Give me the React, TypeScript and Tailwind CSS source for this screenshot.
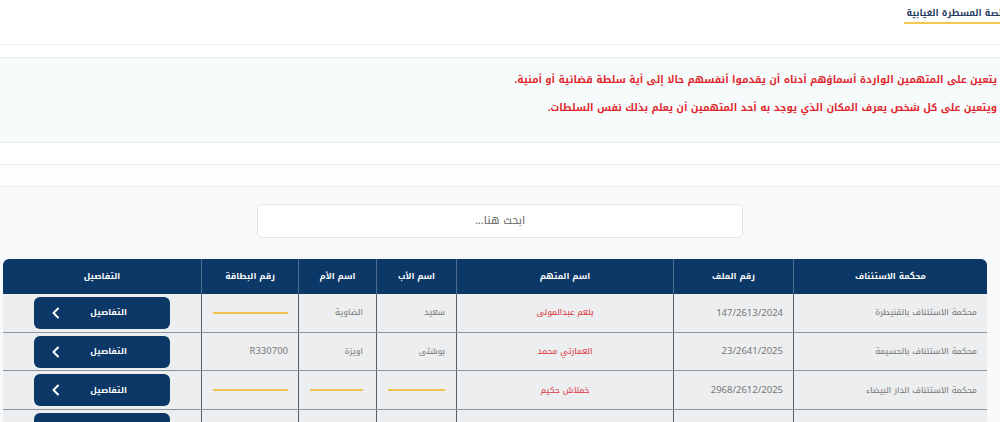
import React from "react";

const Dash = () => <div className="h-[2px] w-full bg-[#f0c24e]" />;

type Row = {
  court: string;
  file: string;
  name: string;
  father: string | null;
  mother: string | null;
  card: string | null;
};

const rows: Row[] = [
  { court: "محكمة الاستئناف بالقنيطرة", file: "147/2613/2024", name: "بلعم عبدالمولى", father: "سعيد", mother: "الضاوية", card: null },
  { court: "محكمة الاستئناف بالحسيمة", file: "23/2641/2025", name: "العمارتي محمد", father: "بوشتى", mother: "اويزة", card: "R330700" },
  { court: "محكمة الاستئناف الدار البيضاء", file: "2968/2612/2025", name: "خملاش حكيم", father: null, mother: null, card: null },
  { court: "", file: "", name: "", father: "", mother: "", card: "" },
];

const Chevron = () => (
  <svg width="10" height="12" viewBox="0 0 10 12" fill="none">
    <path d="M7 1.5 L2.5 6 L7 10.5" stroke="white" strokeWidth="2" strokeLinecap="round" strokeLinejoin="round" />
  </svg>
);

export default function App() {
  return (
    <div
      dir="rtl"
      className="w-[1000px] h-[422px] overflow-hidden bg-white font-['Noto_Kufi_Arabic','Noto_Sans_Arabic','DejaVu_Sans',sans-serif]"
    >
      {/* header */}
      <div className="h-[45px] border-b border-[#ececec] flex">
        <div className="mr-[-8px] flex flex-col">
          <div className="pt-[5px] text-[9px] font-bold text-[#1e3a5f] whitespace-nowrap leading-[16px]">
            منصة المسطرة الغيابية
          </div>
          <div className="mt-[1px] h-[2px] bg-[#f2c94c] ml-[-2px]" />
        </div>
      </div>

      <div className="h-[12px]" />

      {/* alert */}
      <div className="h-[86px] bg-[#f6fcfc] border-y border-[#ededed] pr-[3px] pt-[13px] flex flex-col gap-[11px] text-[10px] font-bold text-[#e1262c] leading-[17px]">
        <div className="whitespace-nowrap">
          يتعين على المتهمين الواردة أسماؤهم أدناه أن يقدموا أنفسهم حالا إلى أية سلطة قضائية أو أمنية.
        </div>
        <div className="whitespace-nowrap">
          ويتعين على كل شخص يعرف المكان الذي يوجد به أحد المتهمين أن يعلم بذلك نفس السلطات.
        </div>
      </div>

      <div className="h-[22px] border-b border-[#ededed]" />
      <div className="h-[22px] border-b border-[#ededed] bg-[#fdfdfd]" />

      {/* body */}
      <div className="bg-[#f7f9fa] pt-[17px] h-[240px]">
        <div className="mx-auto w-[486px] h-[34px] bg-white border border-[#e2e4e6] rounded-[5px] flex items-center justify-center text-[11px] text-[#666]">
          ابحث هنا...
        </div>

        <div className="mt-[21px] mr-[13px] w-[984px] rounded-t-[6px] overflow-hidden text-[8.5px]">
          <div className="flex h-[35px] bg-[#0c3867] text-white font-bold text-[8.5px]">
            <div className="w-[194px] flex items-center justify-center border-l border-[#4f6d8f]">محكمة الاستئناف</div>
            <div className="w-[120px] flex items-center justify-center border-l border-[#4f6d8f]">رقم الملف</div>
            <div className="w-[217px] flex items-center justify-center border-l border-[#4f6d8f]">اسم المتهم</div>
            <div className="w-[80px] flex items-center justify-center border-l border-[#4f6d8f]">اسم الأب</div>
            <div className="w-[78px] flex items-center justify-center border-l border-[#4f6d8f]">اسم الأم</div>
            <div className="w-[97px] flex items-center justify-center border-l border-[#4f6d8f]">رقم البطاقة</div>
            <div className="flex-1 flex items-center justify-center">التفاصيل</div>
          </div>
          {rows.map((r, i) => (
            <div key={i} className="flex h-[38.7px] bg-[#eceef0] border-b border-[#8c949c] text-[#777]">
              <div className="w-[194px] flex items-center pr-[10px] border-l border-[#55606b]">{r.court}</div>
              <div className="w-[120px] flex items-center pr-[10px] border-l border-[#55606b] text-[9.5px]">{r.file}</div>
              <div className="w-[217px] flex items-center justify-center text-[#dc353d] border-l border-[#55606b]">{r.name}</div>
              <div className="w-[80px] flex items-center pr-[11px] pl-[11px] border-l border-[#55606b]">
                {r.father === null ? <Dash /> : r.father}
              </div>
              <div className="w-[78px] flex items-center pr-[13px] pl-[11px] border-l border-[#55606b]">
                {r.mother === null ? <Dash /> : r.mother}
              </div>
              <div className="w-[97px] flex items-center pr-[10px] pl-[11px] border-l border-[#55606b] text-[9.5px]">
                {r.card === null ? <Dash /> : r.card}
              </div>
              <div className="flex-1 flex items-center justify-center">
                <div className="w-[136px] h-[32px] rounded-[6px] bg-[#0c3867] flex items-center justify-between pr-[43px] pl-[17px] text-white font-bold text-[8.5px]">
                  <span>التفاصيل</span>
                  <Chevron />
                </div>
              </div>
            </div>
          ))}
        </div>
      </div>
    </div>
  );
}
